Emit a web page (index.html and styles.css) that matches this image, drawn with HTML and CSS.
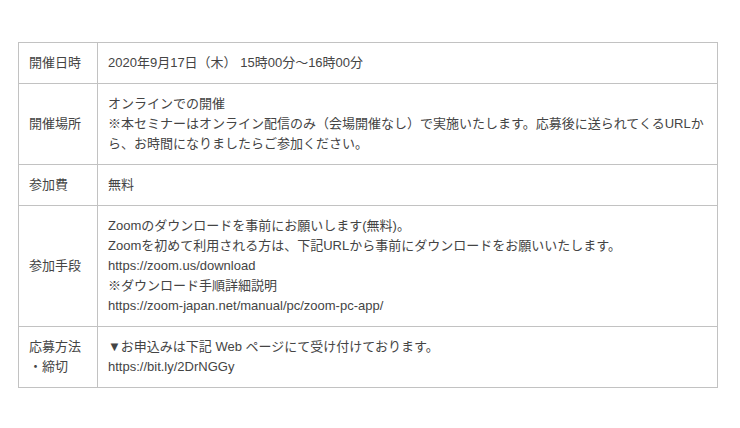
FILE: index.html
```html
<!DOCTYPE html>
<html lang="ja">
<head>
<meta charset="utf-8">
<link rel="stylesheet" href="styles.css">
</head>
<body>
<div class="wrap">
<table class="info">
<tr><th>開催日時</th><td>2020年9月17日（木） 15時00分～16時00分</td></tr>
<tr><th>開催場所</th><td>オンラインでの開催<br>※本セミナーはオンライン配信のみ（会場開催なし）で実施いたします。応募後に送られてくるURLから、お時間になりましたらご参加ください。</td></tr>
<tr><th>参加費</th><td>無料</td></tr>
<tr><th>参加手段</th><td>Zoomのダウンロードを事前にお願いします(無料)。<br>Zoomを初めて利用される方は、下記URLから事前にダウンロードをお願いいたします。<br>https://zoom.us/download<br>※ダウンロード手順詳細説明<br>https://zoom-japan.net/manual/pc/zoom-pc-app/</td></tr>
<tr><th>応募方法<br>・締切</th><td>▼お申込みは下記 Web ページにて受け付けております。<br>https://bit.ly/2DrNGGy</td></tr>
</table>
</div>
</body>
</html>
```
FILE: styles.css
```css
html, body {
  margin: 0;
  padding: 0;
  background: #fff;
}
.wrap {
  padding: 42px 0 0 18px;
}
.info {
  border-collapse: collapse;
  width: 700px;
  font-family: "Liberation Sans", "Noto Sans CJK JP", sans-serif;
  font-size: 13px;
  line-height: 20px;
  color: #444;
}
.info th, .info td {
  border: 1px solid #c2c2c2;
  padding: 10px;
  text-align: left;
  font-weight: normal;
  vertical-align: middle;
}
.info th {
  width: 58px;
}
```
